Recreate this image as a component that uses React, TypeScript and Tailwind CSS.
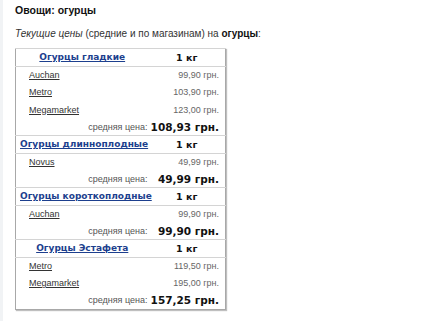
type Shop = { name: string; price: string };
type Group = { title: string; unit: string; shops: Shop[]; avg: string };

const groups: Group[] = [
  {
    title: "Огурцы гладкие",
    unit: "1 кг",
    shops: [
      { name: "Auchan", price: "99,90 грн." },
      { name: "Metro", price: "103,90 грн." },
      { name: "Megamarket", price: "123,00 грн." },
    ],
    avg: "108,93 грн.",
  },
  {
    title: "Огурцы длинноплодные",
    unit: "1 кг",
    shops: [{ name: "Novus", price: "49,99 грн." }],
    avg: "49,99 грн.",
  },
  {
    title: "Огурцы короткоплодные",
    unit: "1 кг",
    shops: [{ name: "Auchan", price: "99,90 грн." }],
    avg: "99,90 грн.",
  },
  {
    title: "Огурцы Эстафета",
    unit: "1 кг",
    shops: [
      { name: "Metro", price: "119,50 грн." },
      { name: "Megamarket", price: "195,00 грн." },
    ],
    avg: "157,25 грн.",
  },
];

const arial = "font-['Liberation_Sans',Arial,sans-serif]";
const verdana = "font-['DejaVu_Sans',Verdana,sans-serif]";

function GroupRows({ group }: { group: Group }) {
  return (
    <>
      <tr className="h-[18px] border-y border-[#d4d4d4]">
        <td className={`${verdana} whitespace-nowrap px-[4px] text-center text-[9px] font-bold leading-none`}>
          <a href="#" className="text-[#1d3f8e] underline">
            {group.title}
          </a>
        </td>
        <td className={`${verdana} text-center text-[9.5px] font-bold leading-none text-[#111]`}>{group.unit}</td>
      </tr>
      {group.shops.map((s) => (
        <tr key={s.name} className="h-[17.5px]">
          <td className={`${arial} pl-[13px] text-[9px] leading-none`}>
            <a href="#" className="text-[#333] underline">
              {s.name}
            </a>
          </td>
          <td className={`${arial} pr-[6px] text-right text-[9px] leading-none text-[#666]`}>{s.price}</td>
        </tr>
      ))}
      <tr className="h-[16.5px]">
        <td className={`${arial} pr-[1px] text-right text-[9px] leading-none text-[#555]`}>средняя цена:</td>
        <td className={`${verdana} whitespace-nowrap pr-[6px] text-right text-[10.5px] font-bold leading-none text-[#111]`}>
          {group.avg}
        </td>
      </tr>
    </>
  );
}

export default function App() {
  return (
    <div className="h-[321px] w-[428px] border-l-[3px] border-[#f1f3f5] bg-white">
      <div className="pl-[12px] pt-[3px]">
        <h1 className={`${arial} text-[10.5px] font-bold leading-[14px] text-[#111]`}>Овощи: огурцы</h1>
        <p className={`${arial} mt-[10px] text-[10px] leading-[13px] text-[#333]`}>
          <i>Текущие цены</i> (средние и по магазинам) на <b className="text-[#111]">огурцы</b>:
        </p>
        <table className="mt-[8px] w-[210px] table-fixed border-collapse border border-[#a8a8a8] shadow-[1px_1px_1px_rgba(0,0,0,0.25)]">
          <colgroup>
            <col className="w-[133px]" />
            <col className="w-[77px]" />
          </colgroup>
          <tbody>
            {groups.map((g) => (
              <GroupRows key={g.title} group={g} />
            ))}
          </tbody>
        </table>
      </div>
    </div>
  );
}
